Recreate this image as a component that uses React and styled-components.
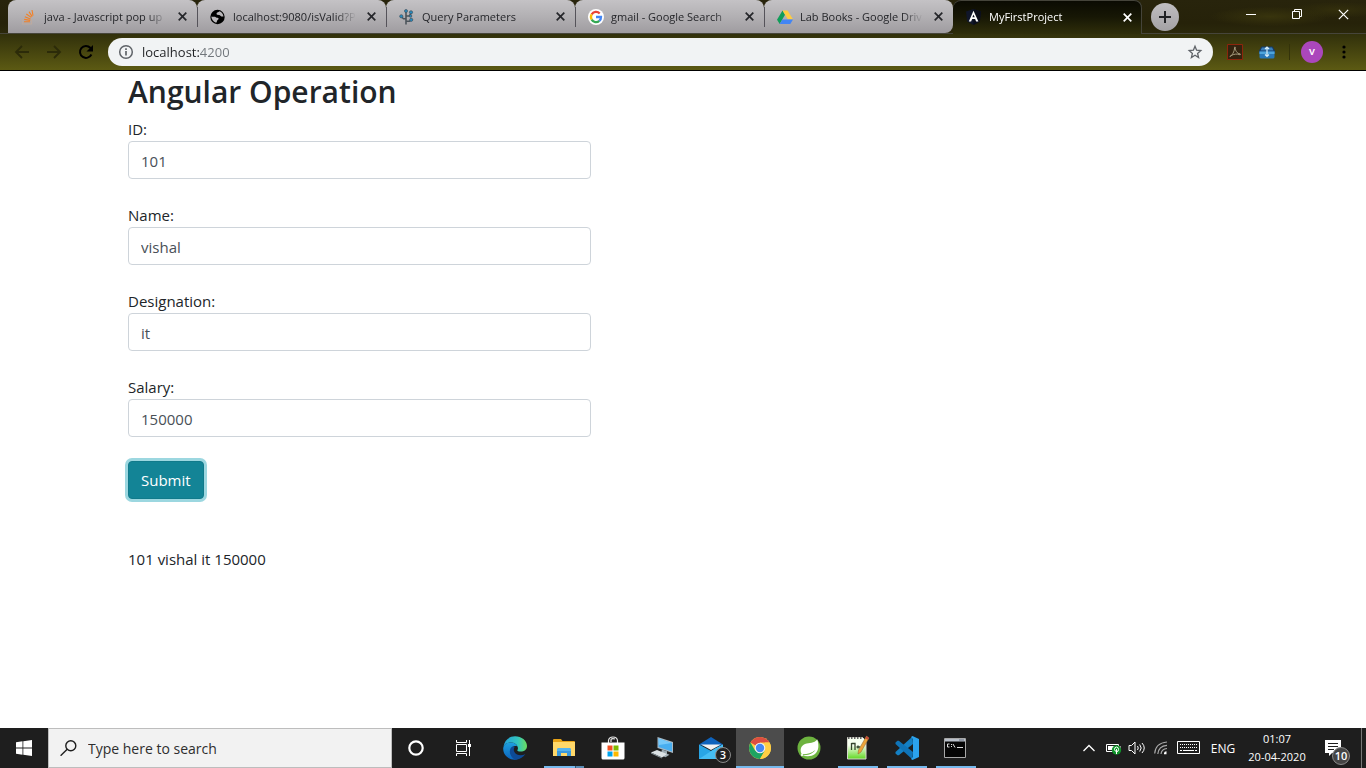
import React from 'react';
import styled, { createGlobalStyle, css } from 'styled-components';

const GlobalStyle = createGlobalStyle`
  *, *::before, *::after { box-sizing: border-box; }
  body { margin: 0; background: #fff; font-family: "Open Sans", "Noto Sans", sans-serif; }
  button, input { font: inherit; margin: 0; }
  button { border: 0; padding: 0; background: none; color: inherit; }
  svg { display: block; flex: none; }
`;

const Desktop = styled.div`
  display: flex;
  flex-direction: column;
  min-height: 100vh;
`;

/* ---------- browser chrome ---------- */

const BrowserBar = styled.header`
  border-bottom: 1px solid #000;
  background: #31300b;
`;

const TabStrip = styled.div`
  display: flex;
  height: 34px;
  padding-left: 8px;
  background:
    radial-gradient(ellipse 60px 10px at 93% 50%, #38340d, transparent),
    radial-gradient(ellipse 50px 8px at 98% 30%, #332f0c, transparent),
    linear-gradient(#28240c, #262209 70%, #2b280b);
  border-bottom: 1px solid #46453a;
`;

const TabList = styled.div`
  display: flex;
  flex: 0 1 1134px;
  min-width: 0;
`;

const Tab = styled.div`
  display: flex;
  align-items: center;
  flex: 0 1 189px;
  min-width: 0;
  height: 33px;
  padding: 0 7px 0 13px;
  gap: 7px;
  position: relative;
  border-radius: 8px 8px 0 0;
  ${(p) => p.$active ? css`
    height: 34px;
    color: #fff;
    background: linear-gradient(#0a0a02, #171705 50%, #2f2e0a);
    box-shadow: inset 0 1px #45443a, inset -1px 0 #45443a;
  ` : css`
    color: #25262a;
    background: linear-gradient(#c4c2c5, #b4b2b5 45%, #9f9ca0);
    &:not(:first-child)::before {
      content: "";
      position: absolute;
      left: 0;
      top: 7px;
      width: 1px;
      height: 20px;
      background: #55535a;
    }
  `}
  ${(p) => p.$last && css`border-radius: 8px 8px 8px 0;`}
`;

const TabTitle = styled.span`
  flex: 1;
  min-width: 0;
  overflow: hidden;
  white-space: nowrap;
  line-height: 20px;
  font-size: 11px;
  mask-image: linear-gradient(to right, #000 calc(100% - 20px), transparent);
`;

const TabClose = styled.button`
  width: 16px;
  height: 16px;
  display: grid;
  place-items: center;
`;

const NewTab = styled.button`
  width: 28px;
  height: 28px;
  margin: 3px 0 0 9px;
  border-radius: 50%;
  display: grid;
  place-items: center;
  color: #202124;
  background: linear-gradient(#c0bec1, #a3a1a4);
`;

const WindowButtons = styled.div`
  display: flex;
  margin-left: auto;
  color: #fff;
`;

const WindowButton = styled.button`
  width: 46px;
  height: 28px;
  display: grid;
  place-items: center;
`;

const Toolbar = styled.div`
  display: flex;
  align-items: center;
  height: 36px;
  padding: 0 6px;
  background: linear-gradient(#31300b, #5c5a13);
  color: #000;
`;

const ToolButton = styled.button`
  width: 32px;
  height: 32px;
  display: grid;
  place-items: center;
  color: ${(p) => (p.$dim ? '#2c2b09' : '#000')};
`;

const Omnibox = styled.label`
  display: flex;
  flex: 1;
  align-items: center;
  height: 28px;
  margin: 0 6px;
  padding: 0 10px;
  gap: 8px;
  border-radius: 14px;
  background: #f1f3f4;
  color: #5f6368;
`;

const AddressInput = styled.input`
  flex: 1;
  min-width: 0;
  height: 20px;
  padding: 0;
  border: 0;
  outline: 0;
  font-size: 13px;
  color: transparent;
  background: linear-gradient(to right, #202124 57px, #70757a 57px);
  background-clip: text;
`;

const Divider = styled.span`
  width: 1px;
  height: 16px;
  margin: 0 6px;
  background: #34330a;
`;

const Avatar = styled.span`
  width: 22px;
  height: 22px;
  border-radius: 50%;
  background: #ab47bc;
  color: #fff;
  font-size: 11px;
  font-weight: 600;
  line-height: 20px;
  text-align: center;
`;

/* ---------- page ---------- */

const Page = styled.main`
  flex: 1;
  width: 100%;
  max-width: 1140px;
  margin: 0 auto;
  padding: 0 15px;
  color: #212529;
  font-size: 15px;
  line-height: 24px;
`;

const Title = styled.h2`
  margin: 0;
  padding: 2px 0 6px;
  font-size: 30px;
  font-weight: 600;
  line-height: 38px;
`;

const FormGrid = styled.form`
  display: grid;
  grid-template-columns: 5fr 7fr;
`;

const Fields = styled.div`
  display: flex;
  flex-direction: column;
  align-items: flex-start;
  gap: 24px;
`;

const Field = styled.div`
  width: 100%;
`;

const FieldLabel = styled.label`
  display: block;
`;

const TextInput = styled.input`
  display: block;
  width: 100%;
  height: 38px;
  padding: 8px 12px 6px;
  border: 1px solid #ced4da;
  border-radius: 4px;
  background: #fff;
  color: #495057;
  outline: 0;
`;

const SubmitButton = styled.button`
  height: 38px;
  padding: 0 12px;
  border: 1px solid #117a8b;
  border-radius: 4px;
  background: #138496;
  color: #fff;
  box-shadow: 0 0 0 3px #9cd7e0;
`;

const Result = styled.p`
  margin: 48px 0 0;
`;

/* ---------- taskbar ---------- */

const Taskbar = styled.footer`
  display: flex;
  height: 40px;
  background: #1e1e1e;
  color: #fff;
`;

const TaskButton = styled.button`
  position: relative;
  width: 48px;
  height: 40px;
  display: grid;
  place-items: center;
  background: ${(p) => (p.$active ? '#4c4c4c' : 'transparent')};
  &::after {
    content: "";
    position: absolute;
    bottom: 0;
    left: ${(p) => (p.$active ? 0 : 4)}px;
    right: ${(p) => (p.$active ? 0 : 4)}px;
    height: 2px;
    background: ${(p) => (p.$stacked
      ? 'linear-gradient(to right, #76b9ed 31px, #38566e 31px, #38566e 32px, #5a8cb4 32px)'
      : p.$open ? '#76b9ed' : 'transparent')};
  }
`;

const SearchBox = styled.label`
  display: flex;
  flex: 0 1 344px;
  min-width: 0;
  align-items: center;
  gap: 11px;
  padding: 0 11px;
  border: 1px solid #bdbdbd;
  background: #f2f2f2;
  color: #1e1e1e;
`;

const SearchInput = styled.input`
  flex: 1;
  min-width: 0;
  padding: 0;
  border: 0;
  outline: 0;
  background: none;
  font-size: 14px;
  &::placeholder { color: #2e2e2e; opacity: 1; }
`;

const Apps = styled.div`
  display: flex;
  gap: 1px;
  margin-left: 3px;
`;

const Badge = styled.span`
  position: absolute;
  left: ${(p) => (p.$wide ? 19 : 28)}px;
  top: 19px;
  width: ${(p) => (p.$wide ? 18 : 16)}px;
  height: ${(p) => (p.$wide ? 18 : 16)}px;
  border: 1px solid #8a8a8a;
  border-radius: 50%;
  background: ${(p) => (p.$wide ? '#454545' : '#222')};
  color: #fff;
  font-size: 11px;
  font-weight: 600;
  line-height: ${(p) => (p.$wide ? 16 : 14)}px;
  text-align: center;
`;

const Tray = styled.div`
  display: flex;
  align-items: center;
  margin-left: auto;
  padding-right: 4px;
`;

const TrayButton = styled.button`
  position: relative;
  display: grid;
  place-items: center;
  width: ${(p) => p.$w || 24}px;
  height: 40px;
  font-size: 12px;
`;

const Clock = styled.time`
  width: 72px;
  font-size: 11px;
  line-height: 18px;
  text-align: center;
`;

const PeekLine = styled.span`
  width: 1px;
  height: 40px;
  margin-left: 8px;
  background: #777;
`;

/* ---------- icons ---------- */

const Cross = ({ size = 9, weight = 1.7 }) => (
  <svg width={size} height={size} viewBox="0 0 9 9" stroke="currentColor" strokeWidth={weight}>
    <path d="M.7.7l7.6 7.6M8.3.7L.7 8.3" />
  </svg>
);

const StackIcon = () => (
  <svg width="16" height="16" viewBox="0 0 16 16" fill="none">
    <path d="M1.500 10v5h9v-5" stroke="#bcaaa0" strokeWidth="1.2" />
    <path d="M3 12.800h6M3.200 10.400l6 1M3.800 7.700l5.700 2.300M5.300 5l5 3.400M8 2.600l3.200 5M11 1l1 5.600" stroke="#f48024" strokeWidth="1.100" />
  </svg>
);

const GlobeIcon = () => (
  <svg width="16" height="16" viewBox="0 0 16 16">
    <circle cx="7.500" cy="8" r="7.200" fill="#000" />
    <path d="M1.300 7.500c1.500.8 3.200-.2 4.500.7 1 .8 2.600.2 2.800 1.300.1 1.200-1.300 1.300-1.600 2.600-.1.800-.3 1.500-1 1.700C3.300 12.700 1.500 10.500 1.300 7.500zM9.500 2.300c-.3 1-3 1-3 2.500 0 1.500 2.800.9 3.900 1.900.7.7 2 1.200 3.100.7-.3-2.200-1.800-4.300-4-5.100z" fill="#b9b7ba" />
  </svg>
);

const TreeIcon = () => (
  <svg width="16" height="16" viewBox="0 0 16 16" fill="none">
    <path d="M7 15.500V2M7 12.300H10.500L13 10M7 9.800H4.500L2 7.300M7 7h3.300L12.500 3.600" stroke="#4c545b" strokeWidth="1.600" />
    <g fill="#268bc0" stroke="#40525e" strokeWidth=".7">
      <circle cx="7" cy="2" r="1.500" /><circle cx="12" cy="3.300" r="1.600" /><circle cx="2.300" cy="7.300" r="1.600" /><circle cx="11.500" cy="7" r="1.300" /><circle cx="12.200" cy="10.800" r="1.600" />
    </g>
  </svg>
);

const GoogleIcon = () => (
  <svg width="16" height="16" viewBox="0 0 16 16">
    <circle cx="8" cy="8" r="8" fill="#fff" />
    <g fill="none" strokeWidth="2.300">
      <path d="M11.700 4.500A5 5 0 0 0 3.700 5.400" stroke="#ea4335" />
      <path d="M3.700 5.400a5 5 0 0 0 0 5.200" stroke="#fbbc05" />
      <path d="M3.700 10.600a5 5 0 0 0 7.600 1.300" stroke="#34a853" />
      <path d="M11.300 11.900A5 5 0 0 0 13 8H8" stroke="#4285f4" />
    </g>
  </svg>
);

const DriveIcon = () => (
  <svg width="16" height="16" viewBox="0 0 16 16">
    <path d="M5.500 1.500L0 10.800l2.700 4.200 5.300-9.300z" fill="#109d58" />
    <path d="M5.500 1.500h5L16 10.300h-5.200z" fill="#ffcd40" />
    <path d="M5.300 10.500H16L13.300 15H2.700z" fill="#4285f4" />
  </svg>
);

const AngularIcon = () => (
  <svg width="16" height="16" viewBox="0 0 16 16">
    <path d="M7.500 0L15 2.500l-1.200 10L7.500 16l-6.300-3.500L0 2.500z" fill="#10162a" />
    <path d="M7.500 0L15 2.500l-1.200 10L7.500 16z" fill="#0a0d1a" />
    <path d="M7.500 1.700L2.800 12.500h2.300l1-2.500h3l1 2.500h2.300zM7.500 5.500L8.700 8.200H6.400z" fill="#fff" fillRule="evenodd" />
  </svg>
);

const PlusIcon = () => (
  <svg width="12" height="12" stroke="currentColor" strokeWidth="2"><path d="M6 0v12M0 6h12" /></svg>
);

const ArrowIcon = ({ right }) => (
  <svg width="16" height="16" viewBox="0 0 16 16" fill="none" stroke="currentColor" strokeWidth="1.800">
    <path d={right ? 'M1 8h13M8 2l6 6-6 6' : 'M15 8H2M8 2L2 8l6 6'} />
  </svg>
);

const ReloadIcon = () => (
  <svg width="16" height="16" viewBox="0 0 16 16" fill="none">
    <path d="M13.400 10.500A6 6 0 1 1 12.300 3.700L14 5.500" stroke="currentColor" strokeWidth="2" />
    <path d="M15 1v6.500H8.500z" fill="currentColor" />
  </svg>
);

const InfoIcon = () => (
  <svg width="16" height="16" viewBox="0 0 16 16" fill="none" stroke="#5f6368" strokeWidth="1.500">
    <circle cx="8" cy="8" r="6.300" /><path d="M8 7v4.500M8 4.300v1.600" strokeWidth="1.700" />
  </svg>
);

const StarIcon = () => (
  <svg width="16" height="16" viewBox="0 0 16 16" fill="none" stroke="#5f6368" strokeWidth="1.300">
    <path d="M8 2.200l1.600 4 4.200.4-3.200 2.800 1 4.100L8 11.300l-3.600 2.200 1-4.100-3.200-2.800 4.200-.4z" />
  </svg>
);

const PdfIcon = () => (
  <svg width="16" height="16" viewBox="0 0 16 16" fill="none">
    <path d="M.5.500h15v15H.5z" fill="#33230f" stroke="#8c260c" />
    <path d="M3 12.500c2-.7 4.500-5 4.600-9 0-1 .8-.8.7 0-.3 3 2 6.300 4.700 6.300.8.2.5 1 0 1-3-1.300-6-.8-9 .8-1 .8-1.500 1-1 .9z" stroke="#a59b7d" strokeWidth="1" />
  </svg>
);

const BoxIcon = () => (
  <svg width="16" height="16" viewBox="0 0 16 16">
    <path d="M0 6.500L2.500 2.500h11L16 6.500V9H0z" fill="#153a68" />
    <path d="M3 3.500h10l1.500 3h-13z" fill="#3a7fb8" />
    <path d="M.5 7.500h15V13q0 1.500-1.500 1.500H2Q.5 14.500.5 13z" fill="#2878b8" />
    <path d="M.5 7.500h15v2.500H.5z" fill="#4fa5dc" />
    <path d="M8 3v9M6 5l2-2 2 2M6 10.500l2 2 2-2" fill="none" stroke="#d6edf8" strokeWidth="1.200" />
  </svg>
);

const DotsIcon = () => (
  <svg width="4" height="14"><circle cx="2" cy="2" r="1.600" /><circle cx="2" cy="7" r="1.600" /><circle cx="2" cy="12" r="1.600" /></svg>
);

const WindowsIcon = () => (
  <svg width="16" height="16" viewBox="0 0 16 16" fill="#fff">
    <path d="M0 2.200l6.500-.9v6.200H0zM7.300 1.200L16 0v7.500H7.300zM0 8.400h6.500v6.300L0 13.800zM7.300 8.400H16V16l-8.700-1.200z" />
  </svg>
);

const SearchIcon = () => (
  <svg width="17" height="16" viewBox="0 0 17 16" fill="none" stroke="currentColor" strokeWidth="1.400">
    <circle cx="10.800" cy="5.700" r="5" /><path d="M7.200 9.200L.6 15.700" />
  </svg>
);

const CortanaIcon = () => (
  <svg width="16" height="16"><circle cx="8" cy="8" r="6.700" fill="none" stroke="#fff" strokeWidth="2.200" /></svg>
);

const TaskViewIcon = () => (
  <svg width="18" height="16" viewBox="0 0 18 16" fill="none" stroke="#fff">
    <path d="M1.500 0v2.500h10V0M1.500 4.500h10v7h-10zM1.500 16v-2.500h10V16M14.500 0v16" />
    <path d="M13 4h3v3h-3z" fill="#fff" stroke="none" />
  </svg>
);

const EdgeIcon = () => (
  <svg width="24" height="24" viewBox="0 0 24 24">
    <defs>
      <linearGradient id="edgeTop" x1="0" x2="1"><stop offset="0" stopColor="#249fd9" /><stop offset=".6" stopColor="#32c5c0" /><stop offset="1" stopColor="#6bdc5d" /></linearGradient>
      <linearGradient id="edgeSide" x1="0" x2="0" y2="1"><stop offset="0" stopColor="#1da0df" /><stop offset="1" stopColor="#0c63bd" /></linearGradient>
    </defs>
    <path d="M.5 10.500C1.300 4.500 6.300.3 12 .3c6.500 0 12 4.300 12 9.800 0 3.700-2.900 5.500-6.200 5.500-2.600 0-3.900-.9-3.400-1.700.7-1 .6-1.700.3-2.900C14 8 11 6.500 8 6.500c-3.500 0-6.500 1.700-7.500 4z" fill="url(#edgeTop)" />
    <path d="M.2 12.500C.5 8.500 4 6.200 8 6.500c3 .1 5.500 1.500 6.300 3.800-4-1.500-6.900 2-5.600 5.600 1.300 4 6 5.700 10.300 4.700-2 2-4.500 3.200-7.500 3.200C5 23.800 0 18.500.2 12.500z" fill="url(#edgeSide)" />
    <path d="M9 10.800c-4 3.200-2.200 9.700 2.700 12.800 4.300.2 8.500-1.800 10.700-5.500-4 2.200-9 1.400-11-2-.9-1.600-.7-3.500.2-5-1-.8-1.800-.8-2.600-.3z" fill="#0d4a96" />
  </svg>
);

const FolderIcon = () => (
  <svg width="22" height="20" viewBox="0 0 22 20">
    <path d="M0 2q0-1 1-1h7l1.500 2H21q1 0 1 1v14H0z" fill="#e8a317" />
    <path d="M0 4h22v14H0z" fill="#ffd869" />
    <path d="M4 18v-6q0-2 2-2h10q2 0 2 2v6h-4v-3H8v3z" fill="#3a99dd" />
    <path d="M4 12q0-2 2-2h10q2 0 2 2v1H4z" fill="#55b4ee" />
  </svg>
);

const StoreIcon = () => (
  <svg width="24" height="24" viewBox="0 0 24 24">
    <path d="M7.500 7V4.500Q8 1 12 1t4.500 3.500V7M10 6V3.500Q11 2 14 3" fill="none" stroke="#e9e9e9" strokeWidth="1.200" />
    <path d="M.5 6.500h23V22q0 1.500-1.500 1.500H2Q.5 23.500.5 22z" fill="#fff" />
    <path d="M6.500 9.500h5v5h-5z" fill="#f25022" /><path d="M12.500 9.500h5v5h-5z" fill="#7fba00" />
    <path d="M6.500 15.500h5v5h-5z" fill="#00a4ef" /><path d="M12.500 15.500h5v5h-5z" fill="#ffb900" />
  </svg>
);

const ComputerIcon = () => (
  <svg width="24" height="22" viewBox="0 0 24 22">
    <path d="M7.500 0L23 5v11L7.500 11z" fill="#aab9c4" />
    <path d="M8.500 1.500L22 6v8.500L8.500 10z" fill="#48aef0" />
    <path d="M8.500 1.500L22 6 9 8z" fill="#76c9fa" />
    <path d="M12 12.500l5 1.700v2.500l2.500 1-4 2.500-5-2z" fill="#9eabb2" />
    <path d="M1 15.500l6-2.500 10 4-5 3.500z" fill="#dce2e5" /><path d="M1 15.500l11 5v1l-11-5z" fill="#8a969c" />
  </svg>
);

const MailIcon = () => (
  <svg width="24" height="24" viewBox="0 0 24 24">
    <path d="M0 8.500L12 1l12 7.500-12 4z" fill="#0e63bd" />
    <path d="M0 8.500l12 6.500 12-6.500V23H0z" fill="#29a5e5" />
    <path d="M0 23l16-10.500L24 8.500V23z" fill="#46bdf3" />
    <path d="M2 8.500h20L12 14z" fill="#f0f2f4" />
  </svg>
);

const ChromeIcon = () => (
  <svg width="22" height="22" viewBox="0 0 22 22">
    <circle cx="11" cy="11" r="11" fill="#ffce44" />
    <path d="M11 11L1.500 5.500A11 11 0 0 1 20.500 5.500H11z" fill="#dc4e41" />
    <path d="M1.500 5.500A11 11 0 0 0 11 22l4.800-8.300L11 11 6.200 13.700z" fill="#1da462" />
    <path d="M20.500 5.500A11 11 0 0 1 11 22l4.800-8.200L16 5.500z" fill="#ffce44" />
    <circle cx="11" cy="11" r="5.300" fill="#f1f1f1" /><circle cx="11" cy="11" r="4.200" fill="#4587f3" />
  </svg>
);

const SpringIcon = () => (
  <svg width="24" height="24" viewBox="0 0 24 24">
    <circle cx="12" cy="12" r="11.500" fill="#6db33f" />
    <path d="M20.300 3.500c2 6 1.300 11.500-2.300 14.500-3.500 2.800-9 2.500-12.800 1.300 5.500 0 10.500-1.300 13-5.300-3.500 3.500-8 4.300-13.500 4.200C2.500 14 4 9.500 8 8c4.500-1.500 9-.5 12.300-4.500z" fill="#fff" />
    <circle cx="5" cy="19" r="1.100" fill="#fff" />
  </svg>
);

const NotepadIcon = () => (
  <svg width="24" height="26" viewBox="0 0 24 26">
    <defs><linearGradient id="noteFill" x1="0" x2="0" y2="1"><stop offset=".35" stopColor="#f6fff0" /><stop offset="1" stopColor="#60d821" /></linearGradient></defs>
    <path d="M1.500 2.500h15L20 6v18H1.500z" fill="url(#noteFill)" stroke="#d6d6cd" />
    <path d="M2 3h14" stroke="#666" strokeWidth="2" strokeDasharray="1.500 1.500" />
    <path d="M5.500 8v7M5.500 8.500H9V15M10.500 12h3.500M12 10.500v3M15 12h2" fill="none" stroke="#33432b" strokeWidth="1.300" />
    <path d="M20.500 1L23 3l-8 14-3 2 .5-4z" fill="#eda53a" stroke="#8b602c" strokeWidth=".5" />
    <path d="M20.500 1L23 3l-1 1.800-2.700-1.600z" fill="#c44a3d" />
  </svg>
);

const CodeIcon = () => (
  <svg width="24" height="24" viewBox="0 0 24 24">
    <path d="M17.500.5L.5 16v1.500l2 1.700h1.300L18 8z" fill="#1480c4" />
    <path d="M17.500 23.500L.5 8V6.500l2-1.700h1.300L18 16z" fill="#0f74b8" />
    <path d="M17.500 0L24 3v18l-6.500 3-1.500-1 2-2V3l-2-2z" fill="#2ba3ee" />
  </svg>
);

const TerminalIcon = () => (
  <svg width="24" height="20" viewBox="0 0 24 20">
    <path d="M.5.500h21v19H.5z" fill="#050505" stroke="#a8a8a8" />
    <path d="M1 1h20v2.500H1z" fill="#b9c0ca" /><path d="M15 1.500h5v1h-5z" fill="#69717e" />
    <path d="M5.500 6H3.500v3h2M7.500 6v1M7.500 8v1M9 6l2 3.500M13 9.500h6" fill="none" stroke="#ddd" />
  </svg>
);

const ChevronIcon = () => (
  <svg width="12" height="8" viewBox="0 0 12 8" fill="none" stroke="#fff" strokeWidth="1.300"><path d="M.5 7L6 1.500 11.500 7" /></svg>
);

const BatteryIcon = () => (
  <svg width="17" height="14" viewBox="0 0 17 14">
    <path d="M1.500 3.500h12v7h-12zM15 5v4" fill="none" stroke="#fff" /><path d="M3 5h7v4H3z" fill="#fff" />
    <circle cx="11.500" cy="9" r="4.700" fill="#11952b" />
    <path d="M11.500 13V8M9.500 8.500q0-2.500 2-2.500t2 2.500-2 2-2-2z" fill="none" stroke="#fff" />
  </svg>
);

const VolumeIcon = () => (
  <svg width="18" height="14" viewBox="0 0 18 14" fill="none" stroke="#fff">
    <path d="M1 4.500h2.500L7 1v12L3.500 9.500H1zM9.500 5q1.500 2 0 4M11.700 3.500q3 3.500 0 7M14 2q4.500 5 0 10" />
  </svg>
);

const WifiIcon = () => (
  <svg width="14" height="14" viewBox="0 0 14 14" fill="none" stroke="#aaa" strokeWidth="1.200">
    <path d="M.7 12.500Q1.500 2 13 1M3.800 13Q4.500 5 13 4.300M7 13Q7.500 8 13 7.500" /><path d="M10 12q.3-1.500 2.500-1.700v3H10z" fill="#fff" stroke="none" />
  </svg>
);

const KeyboardIcon = () => (
  <svg width="24" height="14" viewBox="0 0 24 14" fill="none" stroke="#fff">
    <path d="M.5.500h22v12H.5z" /><path d="M3 3.500h17M3 6.500h17" strokeDasharray="1 1" /><path d="M3 9.500h2M6 9.500h11M18 9.500h2" />
  </svg>
);

const NoteIcon = () => (
  <svg width="16" height="16" viewBox="0 0 16 16">
    <path d="M0 0h16v13H7l-3 3v-3H0z" fill="#fff" /><path d="M3 3.500h10M3 6.500h10M3 9.500h6" stroke="#1e1e1e" />
  </svg>
);

/* ---------- content ---------- */

const tabs = [
  { title: 'java - Javascript pop up', Icon: StackIcon },
  { title: 'localhost:9080/isValid?P', Icon: GlobeIcon },
  { title: 'Query Parameters', Icon: TreeIcon },
  { title: 'gmail - Google Search', Icon: GoogleIcon },
  { title: 'Lab Books - Google Driv', Icon: DriveIcon, last: true },
  { title: 'MyFirstProject', Icon: AngularIcon, active: true },
];

const fields = [
  { id: 'id', label: 'ID:', value: '101' },
  { id: 'name', label: 'Name:', value: 'vishal' },
  { id: 'designation', label: 'Designation:', value: 'it' },
  { id: 'salary', label: 'Salary:', value: '150000' },
];

const apps = [
  { name: 'Edge', Icon: EdgeIcon },
  { name: 'File Explorer', Icon: FolderIcon, open: true, stacked: true },
  { name: 'Store', Icon: StoreIcon },
  { name: 'Remote Desktop', Icon: ComputerIcon },
  { name: 'Mail', Icon: MailIcon, badge: 3 },
  { name: 'Chrome', Icon: ChromeIcon, open: true, active: true },
  { name: 'Spring Tools', Icon: SpringIcon },
  { name: 'Notepad++', Icon: NotepadIcon, open: true },
  { name: 'Visual Studio Code', Icon: CodeIcon, open: true },
  { name: 'Command Prompt', Icon: TerminalIcon, open: true },
];

export default function App() {
  return (
    <>
      <GlobalStyle />
      <Desktop>
        <BrowserBar>
          <TabStrip>
            <TabList>
              {tabs.map(({ title, Icon, active, last }) => (
                <Tab key={title} $active={active} $last={last}>
                  <Icon />
                  <TabTitle>{title}</TabTitle>
                  <TabClose aria-label="Close tab"><Cross /></TabClose>
                </Tab>
              ))}
            </TabList>
            <NewTab aria-label="New tab"><PlusIcon /></NewTab>
            <WindowButtons>
              <WindowButton aria-label="Minimize">
                <svg width="10" height="10" stroke="currentColor"><path d="M0 5.500h10" /></svg>
              </WindowButton>
              <WindowButton aria-label="Restore">
                <svg width="10" height="10" fill="none" stroke="currentColor"><path d="M.5 2.500h7v7h-7zM2.500 2.500v-2h7v7h-2" /></svg>
              </WindowButton>
              <WindowButton aria-label="Close"><Cross size={11} weight={1} /></WindowButton>
            </WindowButtons>
          </TabStrip>
          <Toolbar>
            <ToolButton $dim aria-label="Back"><ArrowIcon /></ToolButton>
            <ToolButton $dim aria-label="Forward"><ArrowIcon right /></ToolButton>
            <ToolButton aria-label="Reload"><ReloadIcon /></ToolButton>
            <Omnibox>
              <InfoIcon />
              <AddressInput aria-label="Address" defaultValue="localhost:4200" />
              <StarIcon />
            </Omnibox>
            <ToolButton aria-label="PDF"><PdfIcon /></ToolButton>
            <ToolButton aria-label="Downloads"><BoxIcon /></ToolButton>
            <Divider />
            <ToolButton aria-label="Profile"><Avatar>v</Avatar></ToolButton>
            <ToolButton aria-label="Menu"><DotsIcon /></ToolButton>
          </Toolbar>
        </BrowserBar>

        <Page>
          <Title>Angular Operation</Title>
          <FormGrid onSubmit={(e) => e.preventDefault()}>
            <Fields>
              {fields.map((f) => (
                <Field key={f.id}>
                  <FieldLabel htmlFor={f.id}>{f.label}</FieldLabel>
                  <TextInput id={f.id} defaultValue={f.value} />
                </Field>
              ))}
              <SubmitButton type="submit">Submit</SubmitButton>
            </Fields>
          </FormGrid>
          <Result>101 vishal it 150000</Result>
        </Page>

        <Taskbar>
          <TaskButton aria-label="Start"><WindowsIcon /></TaskButton>
          <SearchBox>
            <SearchIcon />
            <SearchInput aria-label="Search" placeholder="Type here to search" />
          </SearchBox>
          <TaskButton aria-label="Cortana"><CortanaIcon /></TaskButton>
          <TaskButton aria-label="Task view"><TaskViewIcon /></TaskButton>
          <Apps>
            {apps.map(({ name, Icon, badge, open, active, stacked }) => (
              <TaskButton key={name} aria-label={name} $open={open} $active={active} $stacked={stacked}>
                <Icon />
                {badge && <Badge>{badge}</Badge>}
              </TaskButton>
            ))}
          </Apps>
          <Tray>
            <TrayButton aria-label="Hidden icons"><ChevronIcon /></TrayButton>
            <TrayButton aria-label="Battery"><BatteryIcon /></TrayButton>
            <TrayButton aria-label="Volume"><VolumeIcon /></TrayButton>
            <TrayButton aria-label="Network"><WifiIcon /></TrayButton>
            <TrayButton $w={32} aria-label="Keyboard"><KeyboardIcon /></TrayButton>
            <TrayButton $w={36}>ENG</TrayButton>
            <Clock>01:07<br />20-04-2020</Clock>
            <TrayButton $w={40} aria-label="Notifications">
              <NoteIcon />
              <Badge $wide>10</Badge>
            </TrayButton>
            <PeekLine />
          </Tray>
        </Taskbar>
      </Desktop>
    </>
  );
}
